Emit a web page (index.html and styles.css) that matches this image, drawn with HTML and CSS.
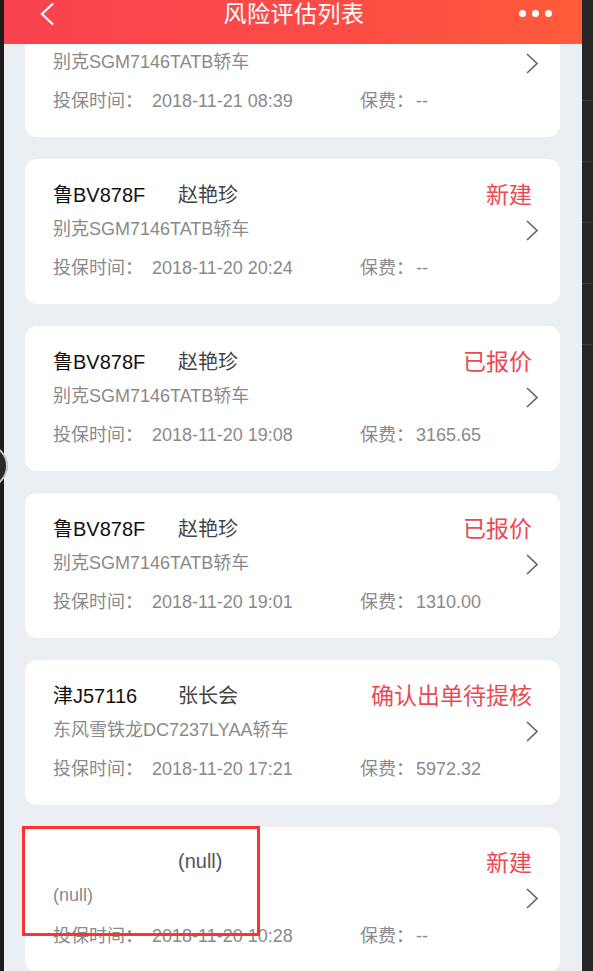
FILE: index.html
```html
<!DOCTYPE html>
<html lang="zh-CN">
<head>
  <meta charset="UTF-8">
  <title>风险评估列表</title>
  <link rel="stylesheet" href="styles.css">
</head>
<body>

  <div class="edge-left"></div>

  <div class="phone">
    <div class="navbar">
      <svg class="back" width="16" height="24" viewBox="0 0 16 24">
        <path d="M14 1.5 L3 12 L14 22.5" fill="none" stroke="#fff" stroke-width="2.2"/>
      </svg>
      <div class="nav-title">风险评估列表</div>
      <div class="more"><i></i><i></i><i></i></div>
    </div>

    <div class="list">

      <div class="card">
        <div class="row-top">
          <span class="plate">鲁BV878F</span>
          <span class="name">赵艳珍</span>
          <span class="status">新建</span>
        </div>
        <div class="row-sub">
          <span class="model">别克SGM7146TATB轿车</span>
          <svg class="arrow" width="12" height="21" viewBox="0 0 12 21"><path d="M1 1 L11 10.5 L1 20" fill="none" stroke="#666" stroke-width="1.6"/></svg>
        </div>
        <div class="row-info">
          <span class="time"><span class="lbl">投保时间：</span>2018-11-21 08:39</span>
          <span class="fee"><span class="lbl-fee">保费：</span>--</span>
        </div>
      </div>

      <div class="card">
        <div class="row-top">
          <span class="plate">鲁BV878F</span>
          <span class="name">赵艳珍</span>
          <span class="status">新建</span>
        </div>
        <div class="row-sub">
          <span class="model">别克SGM7146TATB轿车</span>
          <svg class="arrow" width="12" height="21" viewBox="0 0 12 21"><path d="M1 1 L11 10.5 L1 20" fill="none" stroke="#666" stroke-width="1.6"/></svg>
        </div>
        <div class="row-info">
          <span class="time"><span class="lbl">投保时间：</span>2018-11-20 20:24</span>
          <span class="fee"><span class="lbl-fee">保费：</span>--</span>
        </div>
      </div>

      <div class="card">
        <div class="row-top">
          <span class="plate">鲁BV878F</span>
          <span class="name">赵艳珍</span>
          <span class="status">已报价</span>
        </div>
        <div class="row-sub">
          <span class="model">别克SGM7146TATB轿车</span>
          <svg class="arrow" width="12" height="21" viewBox="0 0 12 21"><path d="M1 1 L11 10.5 L1 20" fill="none" stroke="#666" stroke-width="1.6"/></svg>
        </div>
        <div class="row-info">
          <span class="time"><span class="lbl">投保时间：</span>2018-11-20 19:08</span>
          <span class="fee"><span class="lbl-fee">保费：</span>3165.65</span>
        </div>
      </div>

      <div class="card">
        <div class="row-top">
          <span class="plate">鲁BV878F</span>
          <span class="name">赵艳珍</span>
          <span class="status">已报价</span>
        </div>
        <div class="row-sub">
          <span class="model">别克SGM7146TATB轿车</span>
          <svg class="arrow" width="12" height="21" viewBox="0 0 12 21"><path d="M1 1 L11 10.5 L1 20" fill="none" stroke="#666" stroke-width="1.6"/></svg>
        </div>
        <div class="row-info">
          <span class="time"><span class="lbl">投保时间：</span>2018-11-20 19:01</span>
          <span class="fee"><span class="lbl-fee">保费：</span>1310.00</span>
        </div>
      </div>

      <div class="card">
        <div class="row-top">
          <span class="plate">津J57116</span>
          <span class="name">张长会</span>
          <span class="status">确认出单待提核</span>
        </div>
        <div class="row-sub">
          <span class="model">东风雪铁龙DC7237LYAA轿车</span>
          <svg class="arrow" width="12" height="21" viewBox="0 0 12 21"><path d="M1 1 L11 10.5 L1 20" fill="none" stroke="#666" stroke-width="1.6"/></svg>
        </div>
        <div class="row-info">
          <span class="time"><span class="lbl">投保时间：</span>2018-11-20 17:21</span>
          <span class="fee"><span class="lbl-fee">保费：</span>5972.32</span>
        </div>
      </div>

      <div class="card">
        <div class="row-top">
          <span class="plate"></span>
          <span class="name null">(null)</span>
          <span class="status">新建</span>
        </div>
        <div class="row-sub">
          <span class="model">(null)</span>
          <svg class="arrow" width="12" height="21" viewBox="0 0 12 21"><path d="M1 1 L11 10.5 L1 20" fill="none" stroke="#666" stroke-width="1.6"/></svg>
        </div>
        <div class="row-info">
          <span class="time"><span class="lbl">投保时间：</span>2018-11-20 10:28</span>
          <span class="fee"><span class="lbl-fee">保费：</span>--</span>
        </div>
      </div>

    </div>
  </div>

  <div class="edge-right">
    <div class="line"></div>
    <div class="line"></div>
    <div class="line"></div>
    <div class="line"></div>
    <div class="line"></div>
  </div>

  <div class="float-btn"></div>
  <div class="mark"></div>

</body>
</html>
```

FILE: styles.css
```css
body {
  margin: 0;
  width: 593px;
  height: 971px;
  overflow: hidden;
  display: flex;
  position: relative;
  background: #1f1f1f;
  font-family: "Liberation Sans", "Noto Sans CJK SC", sans-serif;
}

.edge-left {
  width: 4px;
  background: #1c1c1c;
}

.edge-right {
  flex: 1;
  background: #262626;
  padding-top: 100px;
}

.edge-right .line {
  height: 60px;
  border-top: 1px solid #3a3a3a;
}

.phone {
  width: 578px;
  height: 971px;
  background: #ebeef3;
  overflow: hidden;
  display: flex;
  flex-direction: column;
}

.navbar {
  position: relative;
  z-index: 2;
  flex: none;
  height: 44px;
  display: flex;
  align-items: flex-start;
  justify-content: space-between;
  padding: 2px 30px 0 35px;
  box-sizing: border-box;
  background: linear-gradient(90deg, #f8424f 0%, #fc4a48 50%, #ff5b3a 100%);
}

.back {
  display: block;
}

.nav-title {
  color: #fff;
  font-size: 23px;
  line-height: 24px;
  letter-spacing: 0.5px;
  margin-left: 14px;
}

.more {
  display: flex;
  gap: 6px;
  padding-top: 8px;
}

.more i {
  display: block;
  width: 7px;
  height: 7px;
  border-radius: 50%;
  background: #fff;
}

.list {
  margin-top: -52px;
  padding: 0 22px 0 21px;
  display: flex;
  flex-direction: column;
  gap: 22px;
}

.card {
  flex: none;
  height: 145px;
  box-sizing: border-box;
  background: #fff;
  border-radius: 12px;
  padding: 20px 22px 0 28px;
}

.row-top {
  display: flex;
  align-items: center;
  height: 28px;
}

.plate {
  width: 125px;
  font-size: 20px;
  color: #111;
}

.name {
  flex: 1;
  font-size: 20px;
  color: #444;
}

.name.null {
  color: #555;
}

.status {
  font-size: 23px;
  color: #ea4a54;
  margin-right: 6px;
}

.row-sub {
  display: flex;
  align-items: center;
  justify-content: space-between;
  height: 24px;
  margin-top: 8px;
}

.model {
  font-size: 18px;
  color: #8a8a8a;
}

.arrow {
  display: block;
  margin-top: 6px;
}

.row-info {
  display: flex;
  align-items: center;
  height: 24px;
  margin-top: 15px;
  font-size: 18px;
  color: #8a8a8a;
}

.time {
  width: 307px;
}

.lbl {
  display: inline-block;
  width: 99px;
}

.lbl-fee {
  display: inline-block;
  width: 56px;
}

.float-btn {
  position: absolute;
  left: -36px;
  top: 444px;
  width: 40px;
  height: 40px;
  border-radius: 50%;
  background: #2a2a2a;
  border: 2px solid #c8c8c8;
}

.mark {
  position: absolute;
  left: 22px;
  top: 826px;
  width: 238px;
  height: 110px;
  box-sizing: border-box;
  border: 3px solid #f83434;
}
```
